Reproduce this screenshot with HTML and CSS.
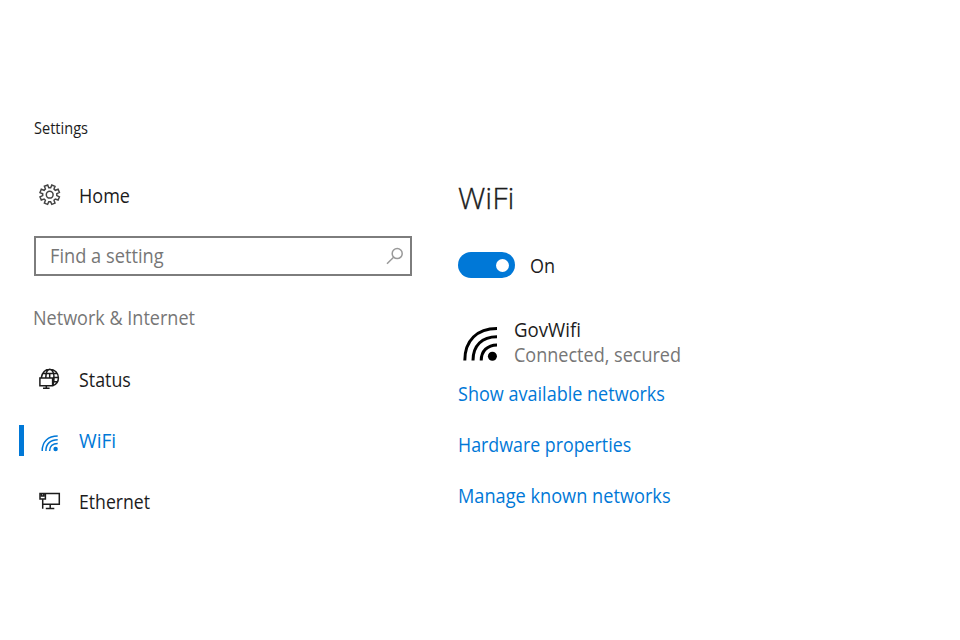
FILE: index.html
```html
<!DOCTYPE html>
<html lang="en">
<head>
<meta charset="utf-8">
<title>Settings</title>
<link rel="stylesheet" href="styles.css">
</head>
<body>
<div class="window">
  <aside class="sidebar">
    <div class="app-title">Settings</div>
    <a class="nav home">
      <svg class="icon" viewBox="0 0 22 22"><path d="M8.7 1 9.8 3.7H11.7L12.8 1 16 2.3 15 5 16.3 6.3 19.1 5.2 20.4 8.4 17.8 9.7V11.6L20.4 12.8 19.1 16 16.3 15 15 16.3 16 19.1 12.8 20.4 11.6 17.8H9.8L8.6 20.4 5.4 19.1 6.4 16.3 5.1 15 2.3 16 1 12.8 3.7 11.6V9.7L1 8.5 2.3 5.3 5.1 6.3 6.4 5 5.4 2.3Z"/><circle cx="10.7" cy="10.7" r="3.4"/></svg>
      <span class="label">Home</span>
    </a>
    <div class="search">
      <span class="label">Find a setting</span>
      <svg class="search-icon" viewBox="0 0 18 18"><circle cx="11.2" cy="6.6" r="5"/><path d="M7.6 10.3 1 16.8"/></svg>
    </div>
    <h2 class="section label">Network &amp; Internet</h2>
    <nav>
      <a class="nav status">
        <svg class="icon" viewBox="0 0 22 22"><path d="M2.4 9.4C3 4.5 6.4 1.2 10.7 1.2C15.8 1.2 19.4 5 19.4 9.8C19.4 13.6 17.4 16.5 14 17.6M6.8 9.4C6.9 5 8 1.6 10.7 1.2C13.6 1.6 15 5 15 9.8C15 13 14.7 15.4 13.9 17M3.8 5.4H17.8M14 9.6h5.4M14 13.7h4.4M10.7 5.4V9.6M.9 9.9H13.6V17.8H.9ZM7.3 17.8v2.5M4 20.3h6.6"/></svg>
        <span class="label">Status</span>
      </a>
      <a class="nav wifi active">
        <svg class="icon" viewBox="0 0 22 22"><path d="M3.2 20.9C3.2 11.6 9.1 6 18.7 6M6.9 20.9C6.9 13.8 11.6 9.7 18.7 9.7M10.6 20.9c0-4.7 3.2-7.5 8.1-7.5"/><circle class="dot" cx="16.6" cy="19" r="2.2"/></svg>
        <span class="label">WiFi</span>
      </a>
      <a class="nav ethernet">
        <svg class="icon" viewBox="0 0 22 22"><path d="M6.7 3.5H20.3V14.3H4M1 3.5H6.4V9H1ZM2.6 3.5V6h2.2V3.5M3.7 9v9.7M11.2 14.3v4M6.8 18.4h8.5"/></svg>
        <span class="label">Ethernet</span>
      </a>
    </nav>
  </aside>
  <main class="content">
    <h1>WiFi</h1>
    <div class="switch-row"><span class="toggle"></span><span class="on label">On</span></div>
    <div class="network">
      <svg class="signal" viewBox="0 0 36 36"><path d="M1.8 34.5C1.8 14.5 14 2.5 34 2.5M10 34.5C10 19.5 19 10.8 34 10.8M18.2 34.5c0-9.5 6.3-15.6 15.8-15.6"/><circle class="dot" cx="29.4" cy="30.3" r="4.5"/></svg>
      <div class="details"><div class="name label">GovWifi</div><div class="state label">Connected, secured</div></div>
    </div>
    <a class="link show label">Show available networks</a>
    <a class="link hardware label">Hardware properties</a>
    <a class="link manage label">Manage known networks</a>
  </main>
</div>
</body>
</html>
```
FILE: styles.css
```css
* { box-sizing: border-box; }
body {
  margin: 0;
  background: #fff;
  color: #1c1c1c;
  font: 19.5px/26px "Open Sans", "Noto Sans", sans-serif;
  white-space: nowrap;
}
.window {
  display: grid;
  grid-template-columns: 412px 1fr;
  column-gap: 46px;
  height: 640px;
  padding-top: 115px;
}
.sidebar { padding-left: 34px; }
/* Condensed lettering */
.label { transform: scaleX(.925); transform-origin: 0 50%; }
.app-title { font-size: 15.5px; transform: scaleX(.94); transform-origin: 0 50%; }
.nav { display: flex; align-items: center; height: 32px; }
.home { margin-top: 38px; }
.icon {
  width: 22px;
  height: 22px;
  margin: 0 18px 0 5px;
  fill: none;
  stroke: #1c1c1c;
  stroke-width: 1.5;
}
.home .icon { stroke: #444; }
.dot { fill: currentColor; stroke: none; }
.search {
  display: flex;
  align-items: center;
  justify-content: space-between;
  height: 40px;
  margin-top: 25px;
  padding: 0 6px 0 14px;
  border: 2px solid #7d7d7d;
  color: #767676;
}
.search .label { transform: scaleX(.935); }
.search-icon { width: 18px; height: 18px; fill: none; stroke: #999; stroke-width: 1.5; }
.section { margin: 29px 0 0 -1px; color: #767676; font-size: 19.5px; font-weight: 400; }
nav { display: grid; row-gap: 29px; margin-top: 32px; }
.nav .label { padding-top: 1px; }
.status .label { transform: scaleX(.915); }
.ethernet .label { transform: scaleX(.905); }
.active {
  height: 31px;
  margin: 1px 0 0 -15px;
  border-left: 5px solid #0078d7;
  padding-left: 10px;
  color: #0078d7;
}
.wifi .label { transform: scaleX(.98); }
.active .icon { stroke: #0078d7; }
.content { display: flex; flex-direction: column; align-items: flex-start; padding-top: 62px; }
h1 { margin: 0; font-size: 30px; line-height: 42px; font-weight: 300; transform: scaleX(1.02); transform-origin: 0 50%; -webkit-text-stroke: .3px; }
.switch-row { display: flex; align-items: center; gap: 15px; margin-top: 33px; }
.on { padding-top: 1px; height: 26px; }
.toggle {
  display: flex;
  align-items: center;
  justify-content: flex-end;
  width: 57px;
  height: 26px;
  padding-right: 6px;
  border-radius: 13px;
  background: #0078d7;
}
.toggle::after { content: ""; width: 13px; height: 13px; border-radius: 50%; background: #fff; }
.network { display: flex; align-items: center; gap: 15px; margin-top: 39px; padding-left: 5px; }
.signal { width: 36px; height: 36px; margin-top: 2px; fill: none; stroke: #000; stroke-width: 3; color: #000; }
.name { transform: scaleX(.955); }
.state { margin-top: -1px; color: #767676; }
.link { color: #0078d7; }
.show { margin-top: 13px; }
.hardware, .manage { margin-top: 25px; }
.hardware { transform: scaleX(.913); }
.manage { transform: scaleX(.932); }
```
